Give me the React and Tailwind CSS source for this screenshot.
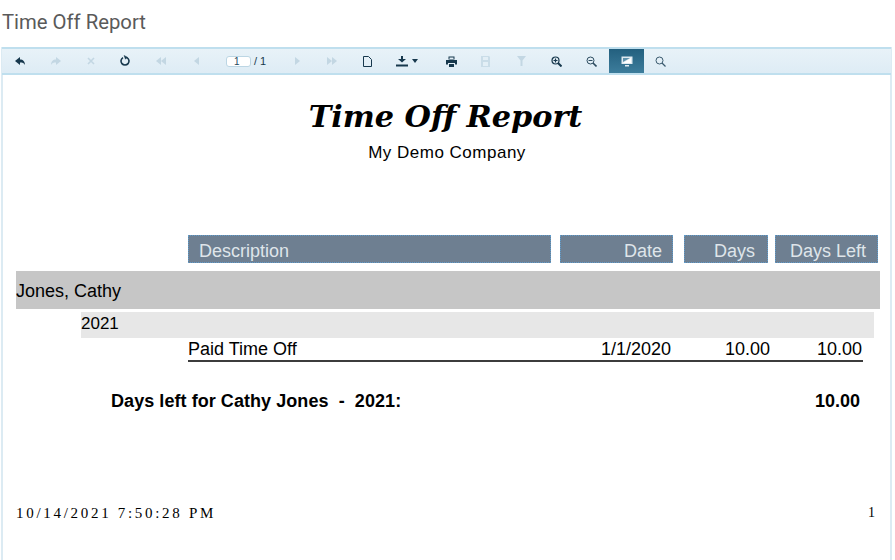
const sans = "font-['Liberation_Sans',Arial,sans-serif]";

const Ic = ({ children, dim, w = 12, h = 12 }) => (
  <svg width={w} height={h} viewBox={`0 0 ${w} ${h}`} fill={dim ? "#c3d7e3" : "#17384d"} stroke="none">
    {children}
  </svg>
);

const Cell = ({ w, ml = 0, children }) => (
  <div className="flex h-full items-center justify-center shrink-0" style={{ width: w, marginLeft: ml }}>{children}</div>
);

const head = "bg-[#6e7f91] border border-dotted border-[#5f9bcb]";

export default function App() {
  return (
    <div className="w-[895px] h-[560px] bg-white overflow-hidden flex flex-col">
      <div className="h-[47px] shrink-0 pl-[2px] pt-[10px] text-[20.3px] leading-[24px] text-[#5a5a5a] font-['Roboto',sans-serif]">Time Off Report</div>
      <div className="ml-[1px] w-[891px] flex-1 border-x-2 border-[#dcebf3] flex flex-col">
        <div className="h-[28px] -mx-[1px] shrink-0 flex border-y-2 border-[#bfdfee] bg-gradient-to-b from-[#e8f2f8] to-[#deecf5]">
          <Cell w={36}>
            <Ic><path d="M1 6 L6 2 V4.5 C9 4.5 11 6.5 11 10 C10 8 8.5 7.5 6 7.5 V10 Z" /></Ic>
          </Cell>
          <Cell w={36}>
            <Ic dim><path d="M11 6 L6 2 V4.5 C3 4.5 1 6.5 1 10 C2 8 3.5 7.5 6 7.5 V10 Z" /></Ic>
          </Cell>
          <Cell w={33}>
            <svg width="10" height="10" viewBox="0 0 10 10" stroke="#c3d7e3" strokeWidth="1.6"><path d="M2 2 L8 8 M8 2 L2 8" /></svg>
          </Cell>
          <Cell w={36}>
            <svg width="12" height="12" viewBox="0 0 12 12" fill="none" stroke="#17384d" strokeWidth="1.6"><path d="M4 2.6 A4 4 0 1 0 8 2.6" /><path d="M5 0.5 L8.5 2.2 L6.5 4.2 Z" fill="#17384d" strokeWidth="0.5" /></svg>
          </Cell>
          <Cell w={35}>
            <Ic dim w={10} h={8}><path d="M5 0 V8 L0 4 Z M10 0 V8 L5 4 Z" /></Ic>
          </Cell>
          <Cell w={36}>
            <Ic dim w={5} h={8}><path d="M5 0 V8 L0 4 Z" /></Ic>
          </Cell>
          <div className="flex h-full items-center shrink-0 pl-[12px] w-[67px]">
            <div className={`w-[25px] h-[11px] rounded-[3px] bg-white border border-[#bcd6e4] text-[10px] leading-[9px] pl-[7px] text-[#274a60] ${sans}`}>1</div>
            <span className={`ml-[3px] text-[11px] text-[#17384d] ${sans}`}>/ 1</span>
          </div>
          <Cell w={33}>
            <Ic dim w={5} h={8}><path d="M0 0 V8 L5 4 Z" /></Ic>
          </Cell>
          <Cell w={36}>
            <Ic dim w={10} h={8}><path d="M0 0 V8 L5 4 Z M5 0 V8 L10 4 Z" /></Ic>
          </Cell>
          <Cell w={35}>
            <svg width="9" height="11" viewBox="0 0 9 11" fill="none" stroke="#17384d" strokeWidth="1"><path d="M0.5 0.5 H5.5 L8.5 3.5 V10.5 H0.5 Z" /></svg>
          </Cell>
          <Cell w={43}>
            <div className="flex items-center gap-[4px]">
              <svg width="12" height="11" viewBox="0 0 12 11" fill="#17384d"><path d="M5 0 H7 V3 H10 L6 6.5 L2 3 H5 Z M0 8.5 H12 V10.5 H0 Z" /></svg>
              <svg width="6" height="4" viewBox="0 0 6 4" fill="#17384d"><path d="M0 0 H6 L3 4 Z" /></svg>
            </div>
          </Cell>
          <Cell w={32} ml={7}>
            <svg width="11" height="11" viewBox="0 0 11 11" fill="#17384d"><path d="M2.5 0.5 H8.5 V3.5 H2.5 Z M0 4 H11 V8.5 H9 V7 H2 V8.5 H0 Z M3 8 H8 V11 H3 Z" /><path d="M3.5 1.5 H7.5 V3 H3.5 Z" fill="#e3eff6" /></svg>
          </Cell>
          <Cell w={35} ml={1}>
            <svg width="9" height="11" viewBox="0 0 9 11" fill="#cadde8"><path d="M0 0 H8 L9 1 V11 H0 Z" /><path d="M2 1 H7 V4 H2 Z M2 6 H7 V10 H2 Z" fill="#e3eff6" /></svg>
          </Cell>
          <Cell w={36}>
            <svg width="9" height="10" viewBox="0 0 9 10" fill="#c3d7e3"><path d="M0 0 H9 L5.5 4.5 V10 H3.5 V4.5 Z" /></svg>
          </Cell>
          <Cell w={35}>
            <svg width="11" height="11" viewBox="0 0 11 11" fill="none" stroke="#17384d" strokeWidth="1.2"><circle cx="4.5" cy="4.5" r="3.5" /><path d="M7 7 L10.5 10.5" strokeWidth="2" /><path d="M2.5 4.5 H6.5 M4.5 2.5 V6.5" /></svg>
          </Cell>
          <Cell w={35}>
            <svg width="11" height="11" viewBox="0 0 11 11" fill="none" stroke="#2c4c60" strokeWidth="1"><circle cx="4.5" cy="4.5" r="3.5" /><path d="M7 7 L10.5 10.5" strokeWidth="1.6" /><path d="M2.5 4.5 H6.5" /></svg>
          </Cell>
          <div className="w-[35px] h-full shrink-0 flex items-center justify-center bg-gradient-to-b from-[#23607f] to-[#3d7d9c]">
            <svg width="12" height="11" viewBox="0 0 12 11"><path d="M0.5 0.5 H11.5 V8 H0.5 Z" fill="#dfeaf1" /><path d="M2 7 L10 2 V7 Z" fill="#ffffff" /><path d="M2 2 H9 L2 6 Z" fill="#5f93ad" /><path d="M4 9 H8 V10.5 H4 Z" fill="#dfeaf1" /></svg>
          </div>
          <Cell w={33}>
            <svg width="11" height="11" viewBox="0 0 11 11" fill="none" stroke="#3a5a6e" strokeWidth="1"><circle cx="4.5" cy="4.5" r="3.5" /><path d="M7 7 L10.5 10.5" strokeWidth="1.3" /></svg>
          </Cell>
        </div>

        <div className={`flex-1 flex flex-col text-black ${sans}`}>
          <div className="pt-[24px] text-center text-[30.3px] leading-[36px] font-bold italic font-['DejaVu_Serif',serif] pr-[2px] whitespace-nowrap">Time Off Report</div>
          <div className="mt-[6px] text-center text-[17px] leading-[24px] tracking-[0.5px] pl-[1px]">My Demo Company</div>

          <div className="mt-[70px] h-[28px] flex text-[18px] leading-[30px] text-[#dfe5ea]">
            <div className={`ml-[185px] w-[363px] pl-[10px] ${head}`}>Description</div>
            <div className={`ml-[9px] w-[113px] pr-[10px] text-right ${head}`}>Date</div>
            <div className={`ml-[11px] w-[84px] pr-[12px] text-right ${head}`}>Days</div>
            <div className={`ml-[7px] w-[103px] pr-[11px] text-right ${head}`}>Days Left</div>
          </div>

          <div className="mt-[8px] ml-[13px] w-[864px] h-[38px] bg-[#c6c6c6] text-[18px] leading-[41px]">Jones, Cathy</div>
          <div className="mt-[3px] ml-[78px] w-[793px] h-[26px] bg-[#e7e7e7] text-[17px] leading-[24px]">2021</div>

          <div className="mt-[1px] ml-[185px] w-[675px] h-[23px] flex pr-[1px] border-b-[2px] border-[#3c3c3c] text-[18px] leading-[21px] whitespace-nowrap">
            <div className="w-[383px] shrink-0">Paid Time Off</div>
            <div className="w-[100px] shrink-0 text-right">1/1/2020</div>
            <div className="w-[99px] shrink-0 text-right">10.00</div>
            <div className="w-[92px] shrink-0 text-right">10.00</div>
          </div>

          <div className="mt-[27px] flex text-[18px] leading-[24px] font-bold whitespace-pre">
            <div className="ml-[108px] w-[702px] tracking-[0.06px]">Days left for Cathy Jones  -  2021:</div>
            <div className="w-[47px] text-right">10.00</div>
          </div>

          <div className="mt-[88px] flex justify-between pl-[13px] pr-[15px] text-[15px] leading-[24px] tracking-[2.7px] font-['Liberation_Serif',serif]">
            <span>10/14/2021 7:50:28 PM</span>
            <span className="text-[14px] tracking-normal">1</span>
          </div>
        </div>
      </div>
    </div>
  );
}
